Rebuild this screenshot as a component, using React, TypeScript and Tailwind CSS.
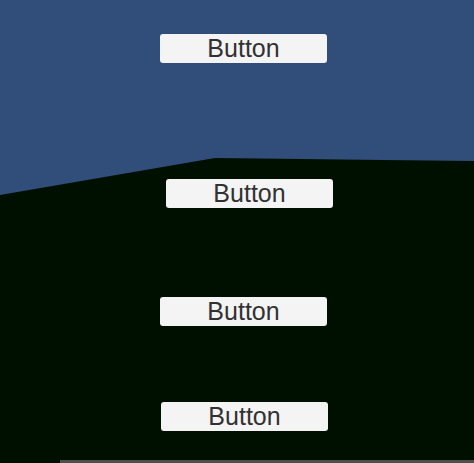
import React from "react";

// Flat panel button, light face with rounded corners
const PanelButton = ({ className = "" }: { className?: string }) => (
  <button
    className={`flex h-[29px] w-[167px] items-center justify-center rounded-[3px] bg-[#f4f4f4] text-[25px] leading-none text-[#323232] ${className}`}
    style={{ fontFamily: '"Liberation Sans", Arial, sans-serif' }}
  >
    Button
  </button>
);

export default function App() {
  return (
    <div className="relative h-[463px] w-[474px] overflow-hidden bg-[#314d79]">
      {/* Sky / ground backdrop */}
      <svg
        className="absolute inset-0"
        width="474"
        height="463"
        viewBox="0 0 474 463"
      >
        <polygon
          points="0,195 215,158 300,159 383,160 474,161 474,463 0,463"
          fill="#001000"
        />
      </svg>

      <div className="relative flex flex-col pt-[34px]">
        <PanelButton className="ml-[160px]" />
        <PanelButton className="ml-[166px] mt-[116px]" />
        <PanelButton className="ml-[160px] mt-[89px]" />
        <PanelButton className="ml-[161px] mt-[76px]" />
        <div className="ml-[60px] mt-[29px] h-[3px] bg-[#4b504b]" />
      </div>
    </div>
  );
}
